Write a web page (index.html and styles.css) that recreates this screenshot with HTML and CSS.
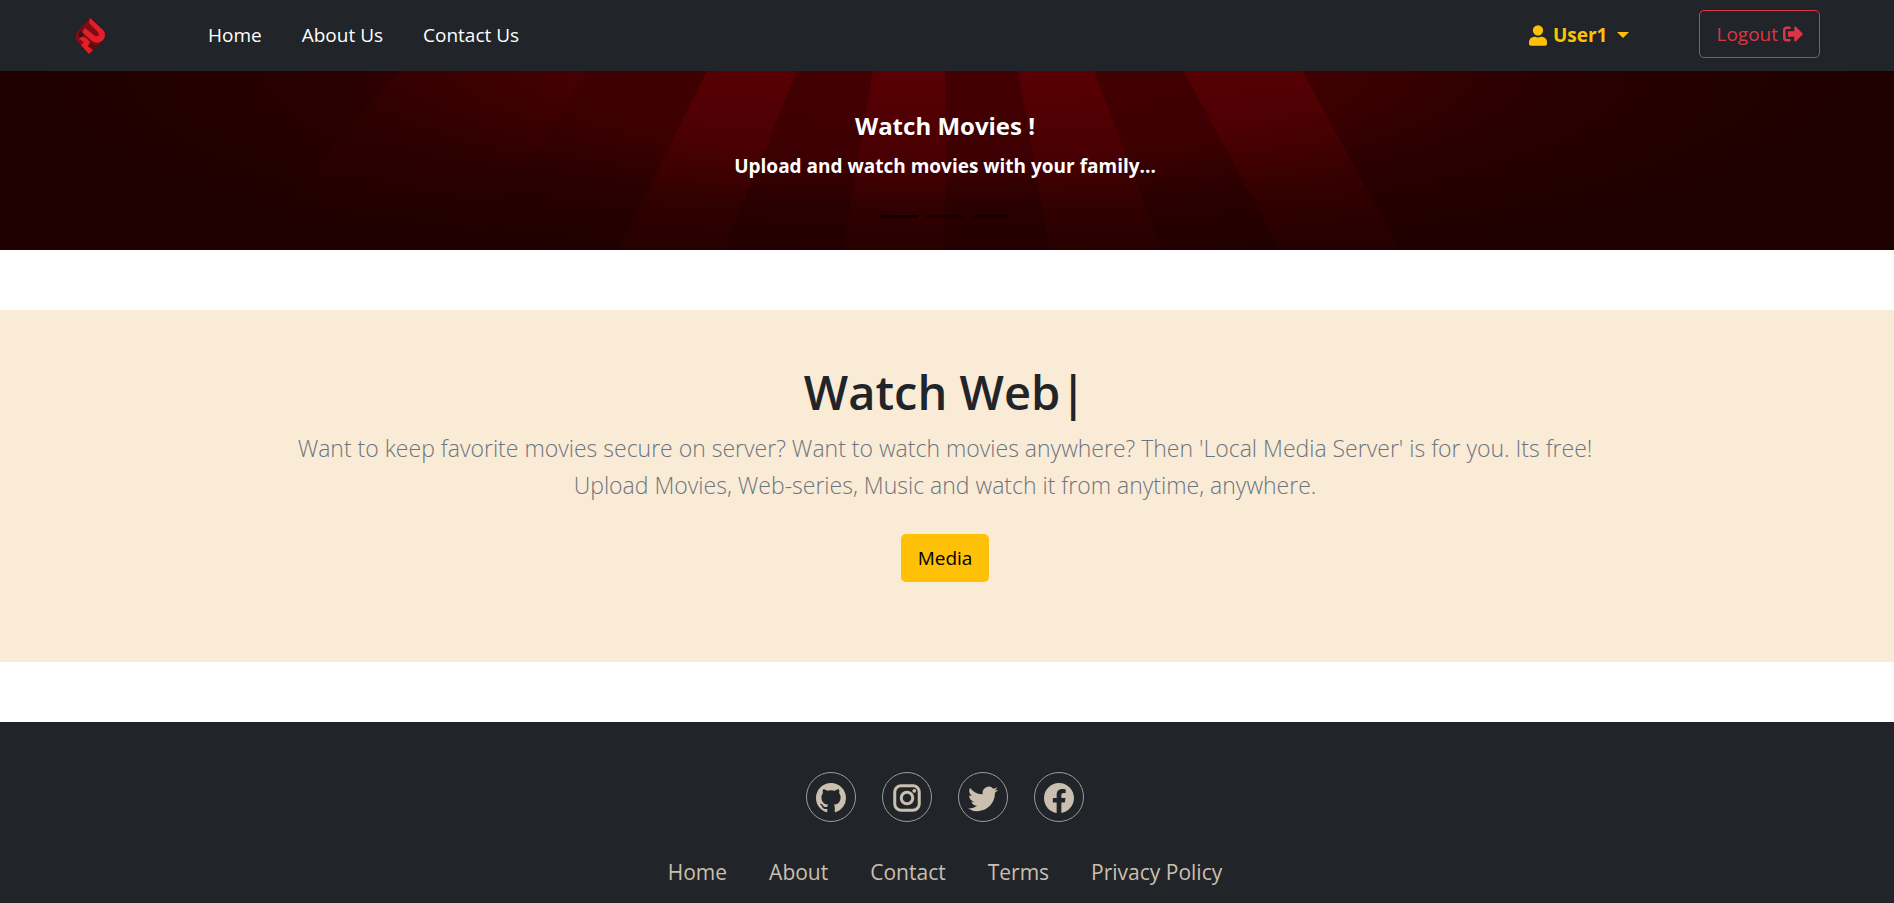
FILE: index.html
```html
<!DOCTYPE html>
<html lang="en">
<head>
<meta charset="utf-8">
<title>Local Media Server</title>
<link rel="stylesheet" href="styles.css">
</head>
<body>
<header class="navbar">
  <a class="brand" href="#" aria-label="Local Media Server">
    <svg width="34" height="38" viewBox="0 0 34 38">
      <path d="M16 1 29 13Q33 18 29 23L15 37 3 24Q0 20 3 15Z" fill="#7d0d12"/>
      <path d="M5 20Q4 15 8 13L11 16Q8 18 9 21Z" fill="#3d1012"/>
      <path d="M16 1 29 13Q33 18 29 23Q24 28 18 24L8 15 11 11 21 19Q24 20 25 18Q25 16 23 14L15 6Z" fill="#e3202a"/>
      <path d="M5 22Q8 18 12 21L16 25 14 29 19 33 15 37 7 28 10 25Z" fill="#e3202a"/>
      <path d="M17 26 23 29 19 33 14 29Z" fill="#5d0d10"/>
    </svg>
  </a>
  <nav class="nav-links" aria-label="Main">
    <a href="#">Home</a>
    <a href="#">About Us</a>
    <a href="#">Contact Us</a>
  </nav>
  <button class="user" type="button" aria-haspopup="true">
    <svg width="18" height="21" viewBox="0 0 448 512" fill="currentColor"><path d="M224 256a128 128 0 1 0 0-256 128 128 0 0 0 0 256zm90 32h-17a174 174 0 0 1-146 0h-17A134 134 0 0 0 0 422v42a48 48 0 0 0 48 48h352a48 48 0 0 0 48-48v-42a134 134 0 0 0-134-134z"/></svg>
    <span>User1</span>
    <span class="caret"></span>
  </button>
  <button class="btn btn-logout" type="button">
    <span>Logout</span>
    <svg width="20" height="20" viewBox="0 0 512 512" fill="currentColor"><path d="m497 273-168 168c-15 15-41 4.500-41-17v-96H152c-13 0-24-11-24-24v-96c0-13 11-24 24-24h136V88c0-21 26-32 41-17l168 168c9 9 9 25 0 34zM192 436v-40c0-7-5-12-12-12H96c-18 0-32-14-32-32V160c0-18 14-32 32-32h84c7 0 12-5 12-12V76c0-7-5-12-12-12H96a96 96 0 0 0-96 96v192a96 96 0 0 0 96 96h84c7 0 12-5 12-12z"/></svg>
  </button>
</header>
<main>
  <section class="hero">
    <svg class="rays" viewBox="0 0 1894 179" preserveAspectRatio="none" aria-hidden="true">
      <defs>
        <linearGradient id="ray" x1="0" y1="0" x2="0" y2="1">
          <stop offset="0" stop-color="#8c0008" stop-opacity=".3"/>
          <stop offset=".6" stop-color="#700004" stop-opacity=".18"/>
          <stop offset="1" stop-color="#500000" stop-opacity=".1"/>
        </linearGradient>
        <linearGradient id="side" x1="0" y1="0" x2="0" y2="1">
          <stop offset="0" stop-color="#800008" stop-opacity=".1"/>
          <stop offset="1" stop-color="#500000" stop-opacity="0"/>
        </linearGradient>
      </defs>
      <path fill="url(#side)" d="M400 0H586L475 179H240Z"/>
      <path fill="url(#ray)" d="M707 0H797L724 179H618ZM873 0H945V179H843ZM1018 0H1094L1162 179H1050ZM1184 0H1302L1400 179H1280Z"/>
    </svg>
    <div class="caption">
      <h5>Watch Movies !</h5>
      <p>Upload and watch movies with your family...</p>
    </div>
    <div class="indicators">
      <button class="dot active" type="button" aria-label="Slide 1"></button>
      <button class="dot" type="button" aria-label="Slide 2"></button>
      <button class="dot" type="button" aria-label="Slide 3"></button>
    </div>
  </section>
  <section class="intro">
    <h1>Watch Web<span class="cursor">|</span></h1>
    <p>Want to keep favorite movies secure on server? Want to watch movies anywhere? Then 'Local Media Server' is for you. Its free!<br>Upload Movies, Web-series, Music and watch it from anytime, anywhere.</p>
    <a class="btn btn-media" href="#">Media</a>
  </section>
</main>
<footer class="footer">
  <div class="social">
    <a href="#" aria-label="GitHub"><svg width="30" height="30" viewBox="0 0 16 16" fill="currentColor"><path d="M8 0C3.580 0 0 3.580 0 8c0 3.540 2.290 6.530 5.470 7.590.4.070.55-.17.55-.38 0-.19-.01-.82-.01-1.490-2.010.37-2.530-.49-2.690-.94-.09-.23-.48-.94-.82-1.130-.28-.15-.68-.52-.01-.53.63-.01 1.080.58 1.230.82.72 1.210 1.870.87 2.330.66.070-.52.28-.87.51-1.070-1.780-.2-3.640-.89-3.640-3.950 0-.87.31-1.590.82-2.150-.08-.2-.36-1.020.08-2.120 0 0 .67-.21 2.200.82.64-.18 1.320-.27 2-.27s1.360.09 2 .27c1.530-1.040 2.200-.82 2.200-.82.44 1.100.16 1.920.08 2.120.51.56.82 1.270.82 2.150 0 3.070-1.870 3.750-3.650 3.950.29.25.54.73.54 1.480 0 1.070-.01 1.930-.01 2.200 0 .21.15.46.55.38A8.010 8.010 0 0 0 16 8c0-4.420-3.580-8-8-8"/></svg></a>
    <a href="#" aria-label="Instagram"><svg width="30" height="30" viewBox="0 0 24 24" fill="none" stroke="currentColor" stroke-width="2.400"><rect x="2.200" y="2.200" width="19.600" height="19.600" rx="5"/><circle cx="12" cy="12" r="4.600"/><circle cx="17.800" cy="6.200" r="1.500" fill="currentColor" stroke="none"/></svg></a>
    <a href="#" aria-label="Twitter"><svg width="30" height="30" viewBox="0 0 16 16" fill="currentColor"><path d="M5.026 15c6.038 0 9.341-5.003 9.341-9.334q.002-.211-.006-.422A6.700 6.700 0 0 0 16 3.542a6.700 6.700 0 0 1-1.889.518 3.300 3.300 0 0 0 1.447-1.817 6.500 6.500 0 0 1-2.087.793A3.286 3.286 0 0 0 7.875 6.030a9.320 9.320 0 0 1-6.767-3.429 3.290 3.290 0 0 0 1.018 4.382A3.300 3.300 0 0 1 .64 6.575v.045a3.290 3.290 0 0 0 2.632 3.218 3.200 3.200 0 0 1-.865.115 3 3 0 0 1-.614-.057 3.280 3.280 0 0 0 3.067 2.277A6.600 6.600 0 0 1 .78 13.580a6 6 0 0 1-.78-.045A9.340 9.340 0 0 0 5.026 15"/></svg></a>
    <a href="#" aria-label="Facebook"><svg width="30" height="30" viewBox="0 0 16 16" fill="currentColor"><path d="M16 8.049c0-4.446-3.582-8.050-8-8.050C3.580 0-.002 3.603-.002 8.050c0 4.017 2.926 7.347 6.750 7.951v-5.625h-2.030V8.050H6.750V6.275c0-2.017 1.195-3.131 3.022-3.131.876 0 1.791.157 1.791.157v1.980h-1.009c-.993 0-1.303.621-1.303 1.258v1.510h2.218l-.354 2.326H9.250V16c3.824-.604 6.750-3.934 6.750-7.951"/></svg></a>
  </div>
  <nav class="footer-links" aria-label="Footer">
    <a href="#">Home</a>
    <a href="#">About</a>
    <a href="#">Contact</a>
    <a href="#">Terms</a>
    <a href="#">Privacy Policy</a>
  </nav>
</footer>
</body>
</html>
```
FILE: styles.css
```css
* { box-sizing: border-box; }
body {
  margin: 0;
  font-family: "Segoe UI", "Open Sans", "Noto Sans", sans-serif;
  font-size: 19px;
  line-height: 30px;
  color: #212529;
  background: #fff;
}
h1, h5, p { margin: 0; }
a { color: inherit; text-decoration: none; }
button { font: inherit; cursor: pointer; }
svg { display: block; }

.navbar {
  display: flex;
  align-items: center;
  min-height: 71px;
  padding: 0 74px 4px;
  background: #212529;
  color: #fff;
}
.brand { margin-right: 100px; padding-top: 5px; }
.nav-links { display: flex; gap: 40px; padding-top: 3px; }
.user {
  display: flex;
  align-items: center;
  gap: 6px;
  margin-left: auto;
  margin-right: 70px;
  padding: 3px 0 0;
  border: 0;
  background: none;
  color: #ffc107;
  font-weight: 700;
}
.caret {
  margin-left: 4px;
  border: 6px solid transparent;
  border-top-color: currentColor;
  border-bottom: 0;
}
.btn {
  display: inline-flex;
  align-items: center;
  gap: 5px;
  height: 48px;
  padding: 0 16px;
  border: 1px solid transparent;
  border-radius: 5px;
}
.btn-logout { background: none; border-color: #dc3545; color: #dc3545; }
.btn-media { background: #ffc107; color: #000; }

.hero {
  position: relative;
  min-height: 179px;
  padding: 40px 4px 0 0;
  background:
    radial-gradient(ellipse 50% 120% at 50% 0, #440003 0%, #3e0002 40%, rgba(48, 0, 1, 0.6) 65%, rgba(30, 0, 0, 0) 100%),
    #1e0000;
  color: #fff;
  text-align: center;
}
.rays { position: absolute; inset: 0; width: 100%; height: 100%; }
.caption { position: relative; font-weight: 700; }
.caption h5 { font-size: 24px; line-height: 30px; margin-bottom: 10px; }
.indicators {
  position: relative;
  display: flex;
  justify-content: center;
  gap: 8px;
  margin-top: 34px;
}
.dot { width: 38px; height: 3px; padding: 0; border: 0; background: #000; opacity: 0.4; }
.dot.active { opacity: 0.8; }

.intro {
  margin: 60px 0;
  padding: 52px 24px 80px 20px;
  background: #faebd7;
  text-align: center;
}
.intro h1 { font-size: 47px; line-height: 60px; font-weight: 600; margin-bottom: 8px; }
.intro p {
  margin-bottom: 30px;
  font-size: 23px;
  line-height: 37px;
  font-weight: 300;
  color: #6c757d;
}

.footer {
  padding: 50px 24px 30px 20px;
  background: #212529;
  color: #cbbfaf;
}
.social { display: flex; justify-content: center; gap: 26px; }
.social a {
  display: grid;
  place-items: center;
  width: 50px;
  height: 50px;
  padding-top: 2px;
  border: 1px solid #9a9c9e;
  border-radius: 50%;
}
.footer-links {
  display: flex;
  flex-wrap: wrap;
  justify-content: center;
  gap: 42px;
  margin-top: 35px;
  font-size: 21px;
}
```
